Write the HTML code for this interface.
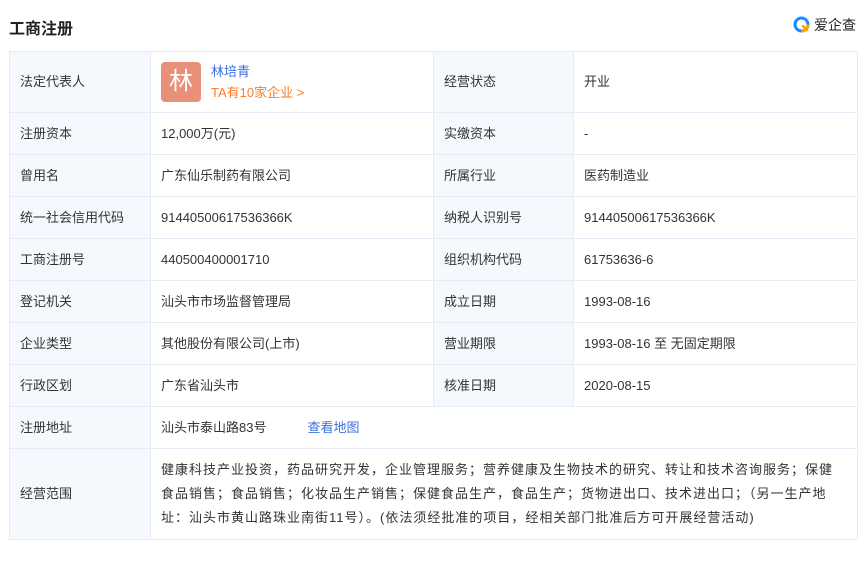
<!DOCTYPE html>
<html><head><meta charset="utf-8"><style>
*{margin:0;padding:0;box-sizing:border-box}
body{width:861px;height:568px;background:#fff;font-family:"Liberation Sans","Noto Sans CJK SC",sans-serif;font-size:13px;color:#333;position:relative;overflow:hidden}
.title{position:absolute;left:9px;top:15px;font-size:16px;font-weight:bold;color:#222}
.logo{position:absolute;right:5px;top:15px;display:flex;align-items:center;font-size:14px;color:#222}
table{position:absolute;left:9px;top:51px;width:848px;border-collapse:collapse;table-layout:fixed}
td{border:1px solid #e4ecf7;padding:0 10px;height:42px;vertical-align:middle;line-height:20px}
td.l{background:#f5f8fd}
a{color:#3b6fe0;text-decoration:none}
</style></head><body>
<div class="title">工商注册</div>
<div class="logo"><svg width="20" height="20" viewBox="0 0 20 20"><circle cx="9.5" cy="9.5" r="6.5" fill="none" stroke="#1a8cff" stroke-width="3"/><path d="M9.5 16 A6.5 6.5 0 0 0 16 9.5" fill="none" stroke="#f7a600" stroke-width="3"/><path d="M11 11 L15 15" stroke="#f7a600" stroke-width="2.5" stroke-linecap="round"/></svg><span style="margin-left:2px">爱企查</span></div>
<table>
<colgroup><col style="width:141px"><col style="width:283px"><col style="width:140px"><col style="width:284px"></colgroup>
<tr style="height:61px"><td class="l">法定代表人</td><td style="padding:0 10px"><div style="display:flex;align-items:center"><div style="width:40px;height:40px;background:#e8907a;border-radius:4px;color:#fff;font-size:24px;text-align:center;line-height:40px">林</div><div style="margin-left:10px;line-height:21px"><div style="color:#3b6fe0">林培青</div><div style="color:#fa7d28">TA有10家企业 &gt;</div></div></div></td><td class="l">经营状态</td><td>开业</td></tr>
<tr><td class="l">注册资本</td><td>12,000万(元)</td><td class="l">实缴资本</td><td>-</td></tr>
<tr><td class="l">曾用名</td><td>广东仙乐制药有限公司</td><td class="l">所属行业</td><td>医药制造业</td></tr>
<tr><td class="l">统一社会信用代码</td><td>91440500617536366K</td><td class="l">纳税人识别号</td><td>91440500617536366K</td></tr>
<tr><td class="l">工商注册号</td><td>440500400001710</td><td class="l">组织机构代码</td><td>61753636-6</td></tr>
<tr><td class="l">登记机关</td><td>汕头市市场监督管理局</td><td class="l">成立日期</td><td>1993-08-16</td></tr>
<tr><td class="l">企业类型</td><td>其他股份有限公司(上市)</td><td class="l">营业期限</td><td>1993-08-16 至 无固定期限</td></tr>
<tr><td class="l">行政区划</td><td>广东省汕头市</td><td class="l">核准日期</td><td>2020-08-15</td></tr>
<tr><td class="l">注册地址</td><td colspan="3">汕头市泰山路83号<a style="margin-left:41px">查看地图</a></td></tr>
<tr style="height:91px"><td class="l">经营范围</td><td colspan="3" style="line-height:24px;white-space:nowrap;letter-spacing:1px">健康科技产业投资，药品研究开发，企业管理服务；营养健康及生物技术的研究、转让和技术咨询服务；保健<br>食品销售；食品销售；化妆品生产销售；保健食品生产，食品生产；货物进出口、技术进出口；（另一生产地<br>址：汕头市黄山路珠业南街11号）。(依法须经批准的项目，经相关部门批准后方可开展经营活动)</td></tr>
</table>
</body></html>
